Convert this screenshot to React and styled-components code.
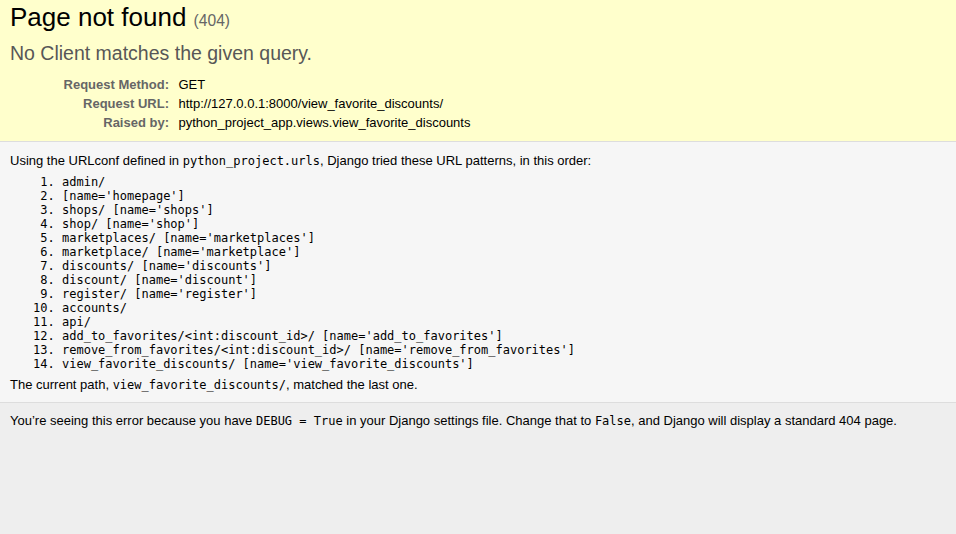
import styled, { createGlobalStyle } from "styled-components"

const GlobalStyle = createGlobalStyle`
  html, body {
    margin: 0;
    padding: 0;
  }
  body {
    background: #eee;
    color: #000;
    font-family: "Liberation Sans", Arial, sans-serif;
    font-size: 13px;
  }
`

const Summary = styled.header`
  background: #ffc;
  padding: 2px 10px 9px;
  border-bottom: 1px solid #ddd;
`

const Title = styled.h1`
  margin: 0 0 9.4px;
  font-size: 26px;
  font-weight: normal;

  small {
    font-size: 60%;
    color: #666;
    font-weight: normal;
  }
`

const Reason = styled.pre`
  margin: 9px 0 10px;
  font-family: "Liberation Sans", Arial, sans-serif;
  font-size: 19.5px;
  color: #575757;
`

const MetaTable = styled.table`
  border: none;
  border-collapse: collapse;
  width: 100%;

  th, td {
    vertical-align: top;
    padding: 2px 3px;
    font-size: 13px;
  }
  th {
    width: 156px;
    text-align: right;
    color: #666;
    padding-right: 6.5px;
  }
  td {
    text-align: left;
  }
`

const Info = styled.main`
  display: block;
  background: #f6f6f6;
  padding: 11px 10px 9px;
  border-bottom: 1px solid #ddd;
`

const Text = styled.p`
  margin: 0;
  line-height: 15px;
`

const Code = styled.code`
  font-family: "DejaVu Sans Mono", monospace;
  font-size: 12px;
`

const PatternList = styled.ol`
  margin: 5.5px 52px 6.5px;
  padding: 0;
`

const Pattern = styled.li`
  font-family: "DejaVu Sans Mono", monospace;
  font-size: 12px;
  line-height: 14px;
`

const Explanation = styled.footer`
  display: block;
  background: #eee;
  padding: 10px 10px;
`

const patterns = [
  "admin/",
  "[name='homepage']",
  "shops/ [name='shops']",
  "shop/ [name='shop']",
  "marketplaces/ [name='marketplaces']",
  "marketplace/ [name='marketplace']",
  "discounts/ [name='discounts']",
  "discount/ [name='discount']",
  "register/ [name='register']",
  "accounts/",
  "api/",
  "add_to_favorites/<int:discount_id>/ [name='add_to_favorites']",
  "remove_from_favorites/<int:discount_id>/ [name='remove_from_favorites']",
  "view_favorite_discounts/ [name='view_favorite_discounts']",
]

const meta = [
  ["Request Method:", "GET"],
  ["Request URL:", "http://127.0.0.1:8000/view_favorite_discounts/"],
  ["Raised by:", "python_project_app.views.view_favorite_discounts"],
]

const App = () => {
  return (
    <>
      <GlobalStyle />
      <Summary>
        <Title>Page not found <small>(404)</small></Title>
        <Reason>No Client matches the given query.</Reason>
        <MetaTable>
          <tbody>
            {meta.map(([label, value]) => (
              <tr key={label}>
                <th>{label}</th>
                <td>{value}</td>
              </tr>
            ))}
          </tbody>
        </MetaTable>
      </Summary>

      <Info>
        <Text>
          Using the URLconf defined in <Code>python_project.urls</Code>, Django tried these URL patterns, in this order:
        </Text>
        <PatternList>
          {patterns.map((p, i) => (
            <Pattern key={i}>{p}</Pattern>
          ))}
        </PatternList>
        <Text>
          The current path, <Code>view_favorite_discounts/</Code>, matched the last one.
        </Text>
      </Info>

      <Explanation>
        <Text>
          You’re seeing this error because you have <Code>DEBUG = True</Code> in your Django settings file. Change that to <Code>False</Code>, and Django will display a standard 404 page.
        </Text>
      </Explanation>
    </>
  )
}

export default App
